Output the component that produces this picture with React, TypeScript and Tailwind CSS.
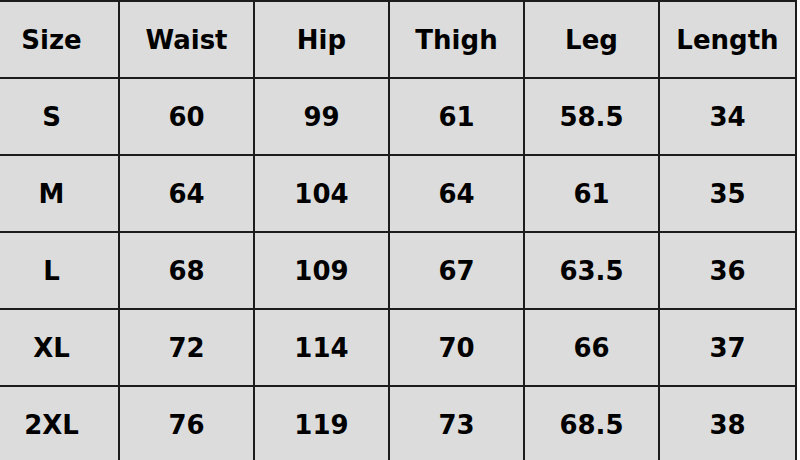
const headers = ["Size", "Waist", "Hip", "Thigh", "Leg", "Length"];

const rows = [
  ["S", "60", "99", "61", "58.5", "34"],
  ["M", "64", "104", "64", "61", "35"],
  ["L", "68", "109", "67", "63.5", "36"],
  ["XL", "72", "114", "70", "66", "37"],
  ["2XL", "76", "119", "73", "68.5", "38"],
];

function Row({ cells }: { cells: string[] }) {
  return (
    <div className="flex">
      {cells.map((cell, i) => (
        <div
          key={i}
          className={`flex h-[77px] shrink-0 items-center justify-center border-b-2 border-r-2 border-[#1c1c1c] pt-[2px] text-[26px] font-bold text-black ${
            i === cells.length - 1 ? "w-[137px]" : "w-[135px]"
          }`}
        >
          {cell}
        </div>
      ))}
    </div>
  );
}

export default function App() {
  return (
    <div
      className="h-[460px] w-[800px] overflow-hidden bg-white"
      style={{ fontFamily: '"DejaVu Sans", "Liberation Sans", sans-serif' }}
    >
      <div className="ml-[-17px] w-fit border-l-2 border-t-2 border-[#1c1c1c] bg-[#dcdcdc]">
        <Row cells={headers} />
        {rows.map((r) => (
          <Row key={r[0]} cells={r} />
        ))}
      </div>
    </div>
  );
}
